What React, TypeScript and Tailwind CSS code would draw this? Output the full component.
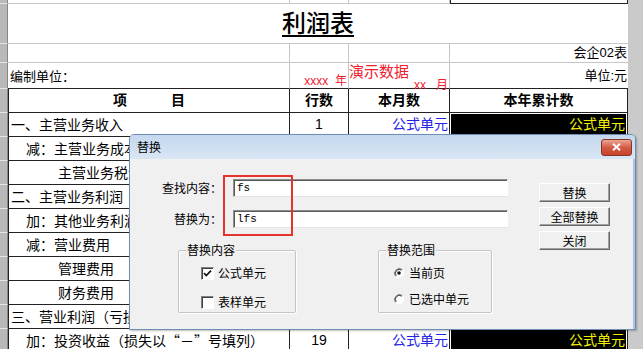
import React from 'react'

const CJK = "font-['Liberation_Sans','Noto_Sans_CJK_SC',sans-serif]"
const CJK_FIRST = "font-['Noto_Sans_CJK_SC','Liberation_Sans',sans-serif]"

// 报表数据行（行号与利润表一致）
const dataRows = [
  { label: '一、主营业务收入', indent: 'pl-[2px]', no: '1' },
  { label: '减：主营业务成本', indent: 'pl-[17px]', no: '4' },
  { label: '主营业务税金及附加', indent: 'pl-[49px]', no: '5' },
  { label: '二、主营业务利润（亏损以“－”号填列）', indent: 'pl-[2px]', no: '10' },
  { label: '加：其他业务利润（亏损以“－”号填列）', indent: 'pl-[17px]', no: '11' },
  { label: '减：营业费用', indent: 'pl-[17px]', no: '14' },
  { label: '管理费用', indent: 'pl-[49px]', no: '15' },
  { label: '财务费用', indent: 'pl-[49px]', no: '16' },
  { label: '三、营业利润（亏损以“－”号填列）', indent: 'pl-[2px]', no: '18' },
  { label: '加：投资收益（损失以“－”号填列）', indent: 'pl-[17px]', no: '19' },
]

function Gutter({ h }: { h: string }) {
  return <div className={`w-[8px] shrink-0 ${h} bg-[#b9b9b9] border-b border-r border-b-[#e4e4e4] border-r-[#858585]`} />
}

function CheckBox({ checked }: { checked?: boolean }) {
  return (
    <span className="w-[13px] h-[13px] bg-white border border-t-[#808080] border-l-[#808080] border-r-white border-b-white shadow-[inset_1px_1px_0_#404040] flex items-center justify-center">
      {checked && (
        <svg width="9" height="9" viewBox="0 0 9 9">
          <path d="M1 4.2 L3.3 6.6 L8 1.6" fill="none" stroke="#111" strokeWidth="1.7" />
        </svg>
      )}
    </span>
  )
}

function Radio({ checked }: { checked?: boolean }) {
  return (
    <svg width="12" height="12" viewBox="0 0 12 12">
      <circle cx="6" cy="6" r="5" fill="#fff" />
      <path d="M9.5 2.5 A5 5 0 0 0 2.5 9.5" fill="none" stroke="#808080" strokeWidth="1" />
      <path d="M8.8 3.2 A4 4 0 0 0 3.2 8.8" fill="none" stroke="#404040" strokeWidth="1" />
      <path d="M2.5 9.5 A5 5 0 0 0 9.5 2.5" fill="none" stroke="#ffffff" strokeWidth="1" />
      {checked && <circle cx="6" cy="6" r="1.8" fill="#111" />}
    </svg>
  )
}

function WinButton({ children }: { children: React.ReactNode }) {
  return (
    <button className="w-[71px] h-[19px] bg-[#f0f0f0] border border-t-white border-l-white border-r-[#696969] border-b-[#696969] shadow-[inset_-1px_-1px_0_#a0a0a0] text-[12px] leading-none text-black flex items-center justify-center">
      {children}
    </button>
  )
}

function TextBox({ value }: { value: string }) {
  return (
    <div className="w-[275px] h-[18px] bg-white border border-t-[#8c8c8c] border-l-[#8c8c8c] border-r-white border-b-[#e3e3e3] shadow-[inset_1px_1px_0_#5a5a5a] flex items-center pl-[3px] font-['Liberation_Mono',monospace] text-[11px] text-black">
      {value}
    </div>
  )
}

function GroupBox({ title, w, pl, children }: { title: string; w: string; pl: string; children: React.ReactNode }) {
  return (
    <div className={`relative ${w} h-[63px] mt-[8px] border border-[#c4c4c4] rounded-[2px] shadow-[inset_1px_1px_0_#fff,1px_1px_0_#fff] ${pl} pt-[14px] flex flex-col`}>
      <span className="absolute left-[7px] -top-[9px] px-[1px] bg-[#f0f0f0] leading-[16px]">{title}</span>
      {children}
    </div>
  )
}

function ReplaceDialog() {
  return (
    <div className={`absolute left-[129px] top-[134px] w-[507px] h-[196px] flex flex-col bg-[#f0f0f0] border border-[#6e8db4] rounded-t-[5px] shadow-[1px_1px_2px_rgba(0,0,0,0.25)] ${CJK_FIRST}`}>
      {/* 标题栏 */}
      <div className="h-[24px] shrink-0 flex items-center justify-between pl-[7px] pr-[3px] rounded-t-[4px] bg-gradient-to-b from-[#c4d8ee] to-[#d9e6f4]">
        <span className="text-[12px] text-black">替换</span>
        <div className="w-[31px] h-[17px] rounded-[3px] border border-[#8a3526] bg-gradient-to-b from-[#eaa594] via-[#d45a42] to-[#c6432c] flex items-center justify-center">
          <svg width="9" height="8" viewBox="0 0 9 8">
            <path d="M1 0.8 L8 7.2 M8 0.8 L1 7.2" stroke="#fff" strokeWidth="2" />
          </svg>
        </div>
      </div>

      {/* 内容 */}
      <div className="relative flex flex-1 pt-[20px] text-[12px] text-black border-r-2 border-[#a9c4e2]">
        <div className="w-[409px] flex flex-col">
          <div className="flex items-center h-[18px]">
            <span className="w-[92px] text-right">查找内容：</span>
            <div className="ml-[11px]"><TextBox value="fs" /></div>
          </div>
          <div className="flex items-center h-[18px] mt-[13px]">
            <span className="w-[92px] text-right">替换为：</span>
            <div className="ml-[11px]"><TextBox value="lfs" /></div>
          </div>
          <div className="flex ml-[48px] mt-[14px] gap-[82px]">
            <GroupBox title="替换内容" w="w-[118px]" pl="pl-[22px]">
              <div className="flex items-center gap-[4px] h-[16px]">
                <CheckBox checked />
                <span>公式单元</span>
              </div>
              <div className="flex items-center gap-[4px] mt-[13px] h-[16px]">
                <CheckBox />
                <span>表样单元</span>
              </div>
            </GroupBox>
            <GroupBox title="替换范围" w="w-[114px]" pl="pl-[14px]">
              <div className="flex items-center gap-[4px] h-[16px]">
                <Radio checked />
                <span>当前页</span>
              </div>
              <div className="flex items-center gap-[4px] mt-[10px] h-[16px]">
                <Radio />
                <span>已选中单元</span>
              </div>
            </GroupBox>
          </div>
        </div>
        <div className="flex flex-col gap-[5px] mt-[4px]">
          <WinButton>替换</WinButton>
          <WinButton>全部替换</WinButton>
          <WinButton>关闭</WinButton>
        </div>

        {/* 标注框 */}
        <div className="absolute left-[93px] top-[16px] w-[70px] h-[61px] border-2 border-[#e5322d]" />
      </div>
    </div>
  )
}

export default function App() {
  const light = 'border-[#c6c6c6]'
  return (
    <div className={`relative w-[643px] h-[349px] overflow-hidden bg-white flex ${CJK}`}>
      <div className="w-[628px] flex flex-col">
        {/* 上一行残留 */}
        <div className="flex h-[4px]">
          <Gutter h="h-[4px]" />
          <div className={`w-[282px] border-r border-b ${light}`} />
          <div className={`w-[59px] border-r border-b ${light}`} />
          <div className={`w-[101px] border-r border-b ${light}`} />
          <div className="w-[178px] border border-t-0 border-[#222]" />
        </div>

        {/* 标题 */}
        <div className="flex h-[40px]">
          <Gutter h="h-[40px]" />
          <div className={`w-[620px] border-b ${light} flex items-center justify-center pb-[3px]`}>
            <span className={`text-[24px] leading-none font-medium underline underline-offset-[3px] text-black ${CJK_FIRST}`}>利润表</span>
          </div>
        </div>

        {/* 会企02表 */}
        <div className="flex h-[19px]">
          <Gutter h="h-[19px]" />
          <div className={`w-[282px] border-r border-b ${light}`} />
          <div className={`w-[59px] border-r border-b ${light}`} />
          <div className={`w-[101px] border-r border-b ${light}`} />
          <div className={`w-[178px] border-b ${light} flex items-center justify-end pr-[1px] text-[13px] text-black`}>会企02表</div>
        </div>

        {/* 编制单位 */}
        <div className="flex h-[26px]">
          <Gutter h="h-[26px]" />
          <div className={`w-[282px] border-r ${light} border-b border-b-[#222] flex items-center pl-[2px] text-[13px] text-black ${CJK_FIRST}`}>编制单位：</div>
          <div className={`w-[59px] border-r ${light} border-b border-b-[#222] flex items-end justify-end pb-[1px] pr-[1px] text-[12px] leading-none text-[#f0202e]`}>xxxx&nbsp;&nbsp;年</div>
          <div className={`w-[101px] border-r ${light} border-b border-b-[#222] flex flex-col justify-between leading-none text-[#f0202e] pt-[1px] pb-[1px]`}>
            <span className="text-[15px] leading-none">演示数据</span>
            <span className="text-[12px] leading-none self-end pr-[1px]">xx&nbsp;&nbsp;&nbsp;月</span>
          </div>
          <div className="w-[178px] border-b border-b-[#222] flex items-center justify-end pr-[1px] text-[13px] text-black">单位:元</div>
        </div>

        {/* 表头 */}
        <div className="flex h-[24px] font-bold text-[14px] text-black">
          <Gutter h="h-[24px]" />
          <div className="w-[282px] border-l border-r border-b border-[#222] flex items-center justify-center gap-[44px]">
            <span>项</span>
            <span>目</span>
          </div>
          <div className="w-[59px] border-r border-b border-[#222] flex items-center justify-center">行数</div>
          <div className="w-[101px] border-r border-b border-[#222] flex items-center justify-center">本月数</div>
          <div className="w-[178px] border-r border-b border-[#222] flex items-center justify-center">本年累计数</div>
        </div>

        {/* 数据行 */}
        {dataRows.map((r) => (
          <div key={r.no} className="flex h-[24px] text-[14px] text-black">
            <Gutter h="h-[24px]" />
            <div className={`w-[282px] border-l border-r border-b border-[#222] flex items-center whitespace-nowrap overflow-hidden ${CJK_FIRST} ${r.indent}`}>
              {r.label}
            </div>
            <div className="w-[59px] border-r border-b border-[#222] flex items-center justify-center">{r.no}</div>
            <div className="w-[101px] border-r border-b border-[#222] flex items-center justify-end pr-[1px] text-[#2323e6]">公式单元</div>
            <div className="w-[178px] border-r border-b border-[#222] p-[1px]">
              <div className="h-full bg-black flex items-center justify-end pr-[1px] text-[#f2f200]">公式单元</div>
            </div>
          </div>
        ))}
      </div>

      {/* 右侧灰色区域 */}
      <div className="w-[15px] bg-[#cacaca]" />

      <ReplaceDialog />
    </div>
  )
}
